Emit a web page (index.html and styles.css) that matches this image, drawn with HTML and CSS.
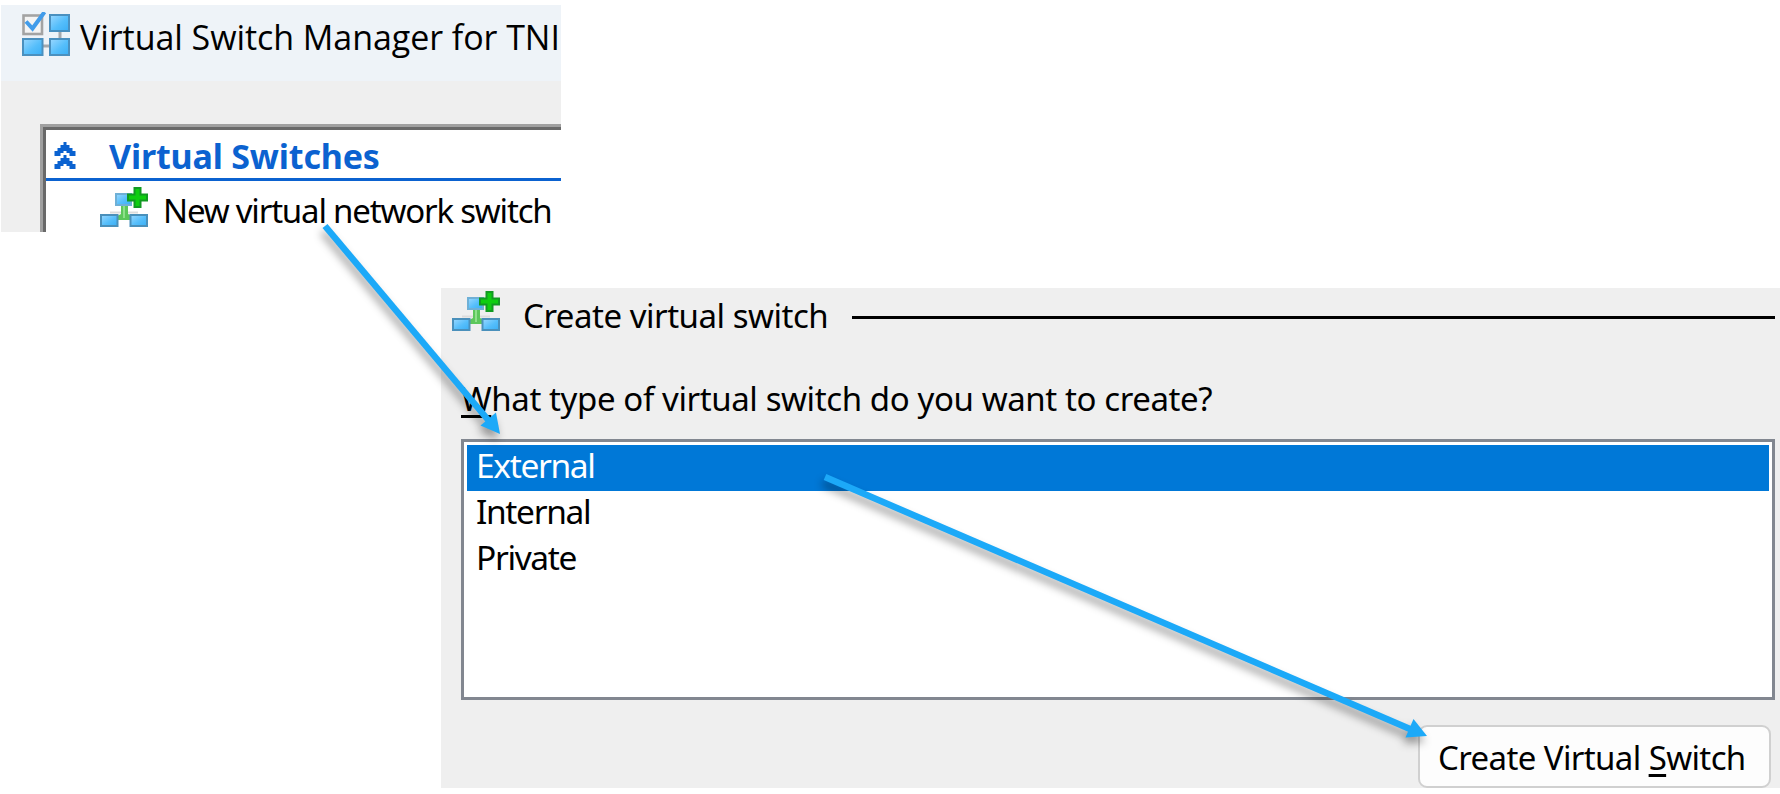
FILE: index.html
```
<!DOCTYPE html>
<html lang="en">
<head>
<meta charset="utf-8">
<title>Virtual Switch Manager</title>
<link rel="stylesheet" href="styles.css">
</head>
<body>
<svg width="0" height="0" class="defs" aria-hidden="true">
  <defs>
    <linearGradient id="tile" x1="0" y1="0" x2="1" y2="1">
      <stop offset="0" stop-color="#9bd8ff"/><stop offset=".55" stop-color="#55befb"/><stop offset="1" stop-color="#3aaef5"/>
    </linearGradient>
    <symbol id="switch-add" viewBox="0 0 48 40">
      <path d="M10 25.500h28" stroke="#dcdcdc" stroke-width="2"/>
      <path d="M21 17h7v10l5 2v4H17v-4l4-2z" fill="#5cc75a"/>
      <path d="M24 18v13" stroke="#8ee08a" stroke-width="2"/>
      <rect x="16" y="7" width="15" height="11" fill="url(#tile)" stroke="#6fb0d6" stroke-width="2"/>
      <rect x="1" y="28" width="16.500" height="11" fill="url(#tile)" stroke="#4a90bb" stroke-width="2"/>
      <rect x="30.500" y="28" width="16.500" height="11" fill="url(#tile)" stroke="#4a90bb" stroke-width="2"/>
      <path d="M34.500 1h6v6.500H47v6h-6.500V20h-6v-6.500H28v-6h6.500z" fill="#0fce10" stroke="#129a22" stroke-width="2"/>
    </symbol>
  </defs>
</svg>
<main class="stage">
  <section class="manager">
    <header class="titlebar">
      <svg class="app-icon" viewBox="0 0 50 46">
        <path d="M38 20v8M21 34h8" stroke="#a5a9ad" stroke-width="3"/>
        <rect x="1.500" y="3.500" width="18.500" height="18.500" fill="#f4f4f4" stroke="#a3a3a3" stroke-width="2.600"/>
        <rect x="28" y="3" width="19" height="16" fill="url(#tile)" stroke="#4a90bf" stroke-width="2"/>
        <rect x="1" y="27" width="19.500" height="16" fill="url(#tile)" stroke="#4a90bf" stroke-width="2"/>
        <rect x="28" y="27" width="19" height="16" fill="url(#tile)" stroke="#4a90bf" stroke-width="2"/>
        <path d="M4 9.500l6.500 7L22.500 0" fill="none" stroke="#429cea" stroke-width="4"/>
      </svg>
      <span class="title">Virtual Switch Manager for TNI</span>
    </header>
    <div class="tree">
      <div class="tree-head">
        <svg class="chevrons" viewBox="0 0 22 28">
          <path d="M9.500 0h3v3h3v3h3v3h3v5h-6v-3h-3v-2h-3v2h-3v3H.500V9h3V6h3V3h3z" fill="#0b62d0"/>
          <path d="M9.500 13h3v3h3v3h3v3h3v5h-6v-3h-3v-2h-3v2h-3v3H.500v-5h3v-3h3v-3h3z" fill="#0b62d0"/>
        </svg>
        <span class="head-text">Virtual Switches</span>
      </div>
      <div class="tree-item"><svg class="switch-icon"><use href="#switch-add"/></svg><span class="item-text">New virtual network switch</span></div>
    </div>
  </section>
  <section class="create">
    <div class="create-head"><svg class="switch-icon"><use href="#switch-add"/></svg><span class="create-text">Create virtual switch</span><span class="rule"></span></div>
    <div class="question"><span class="key">W</span>hat type of virtual switch do you want to create?</div>
    <div class="list">
      <div class="option selected">External</div>
      <div class="option">Internal</div>
      <div class="option">Private</div>
    </div>
    <div class="actions"><button class="btn">Create Virtual <span class="key">S</span>witch</button></div>
  </section>
  <svg class="arrows" viewBox="0 0 1780 794">
    <g fill="#1ca9f8" stroke="#1ca9f8">
      <path d="M325 226L489 421" stroke-width="6.500"/>
      <path d="M500 434L480.500 425.500L496 412.500z" stroke="none"/>
      <path d="M825 477L1410 729" stroke-width="6.500"/>
      <path d="M1427 736L1405.500 737.500L1413.500 719z" stroke="none"/>
    </g>
  </svg>
</main>
</body>
</html>
```
FILE: styles.css
```
* { box-sizing: border-box; }
body { margin: 0; background: #fff; font-family: "Noto Sans", sans-serif; font-size: 33px; color: #000; }
svg { display: block; flex: none; }
span { white-space: nowrap; }
.defs { position: absolute; }
.stage { position: relative; width: 1780px; height: 794px; overflow: hidden; padding-top: 5px; }

.manager { width: 560px; height: 227px; margin-left: 1px; background: #efefef; overflow: hidden; }
.titlebar { display: flex; height: 76px; padding: 7px 0 0 21px; background: #eef3f8; }
.app-icon { width: 50px; height: 46px; }
.title { margin: 2px 0 0 8px; font-family: "Open Sans", sans-serif; font-size: 34px; line-height: 46px; letter-spacing: -0.06px; }
.tree { height: 200px; margin: 43px 0 0 39px; border: solid #a0a0a0; border-width: 3px 0 0 3px; background: #fff; }
.tree-head { display: flex; align-items: center; height: 54px; padding: 1px 0 0 8px; border: solid #696969; border-width: 3px 0 0 3px; box-shadow: inset 0 -3px #0b62d0; color: #0b62d0; font-size: 34px; font-weight: 700; letter-spacing: -0.17px; }
.chevrons { width: 22px; height: 28px; }
.head-text { margin: 0 0 0 33px; }
.tree-item { display: flex; height: 57px; padding-left: 54px; border-left: 3px solid #696969; line-height: 59px; }
.switch-icon { width: 48px; height: 40px; }
.tree-item .switch-icon { margin-top: 6px; }
.item-text { margin-left: 15px; letter-spacing: -1.19px; }

.create { width: 1339px; height: 500px; margin: 56px 0 0 441px; padding: 3px 5px 0 20px; background: #efefef; }
.create-head { display: flex; align-items: flex-start; height: 83px; margin-left: -9px; line-height: 49px; }
.create-text { width: 306px; margin-left: 23px; letter-spacing: -0.48px; }
.rule { flex: 1; height: 3px; margin: 25px 0 0 23px; background: #000; }
.question { height: 65px; line-height: 49px; letter-spacing: -0.4px; }
.key { text-decoration: underline; text-decoration-thickness: 3px; text-underline-offset: 4px; text-decoration-skip-ink: none; }
.list { height: 261px; border: 3px solid #828790; padding: 3px; background: #fff; }
.option { height: 46px; padding: 0 0 4px 9px; font-size: 33.5px; line-height: 41px; letter-spacing: -1.35px; }
.selected { background: #0078d7; color: #fff; }
.actions { display: flex; justify-content: flex-end; padding: 25px 4px 0 0; }
.btn { width: 353px; height: 63px; padding: 2px 0 0 18px; border: 2px solid #d0d0d0; border-radius: 9px; background: #fdfdfd; color: #000; font: inherit; letter-spacing: -0.62px; text-align: left; white-space: nowrap; }

.arrows { position: absolute; inset: 0; width: 1780px; height: 794px; filter: drop-shadow(-2px 6px 4px rgba(0, 0, 0, .38)); }
```
